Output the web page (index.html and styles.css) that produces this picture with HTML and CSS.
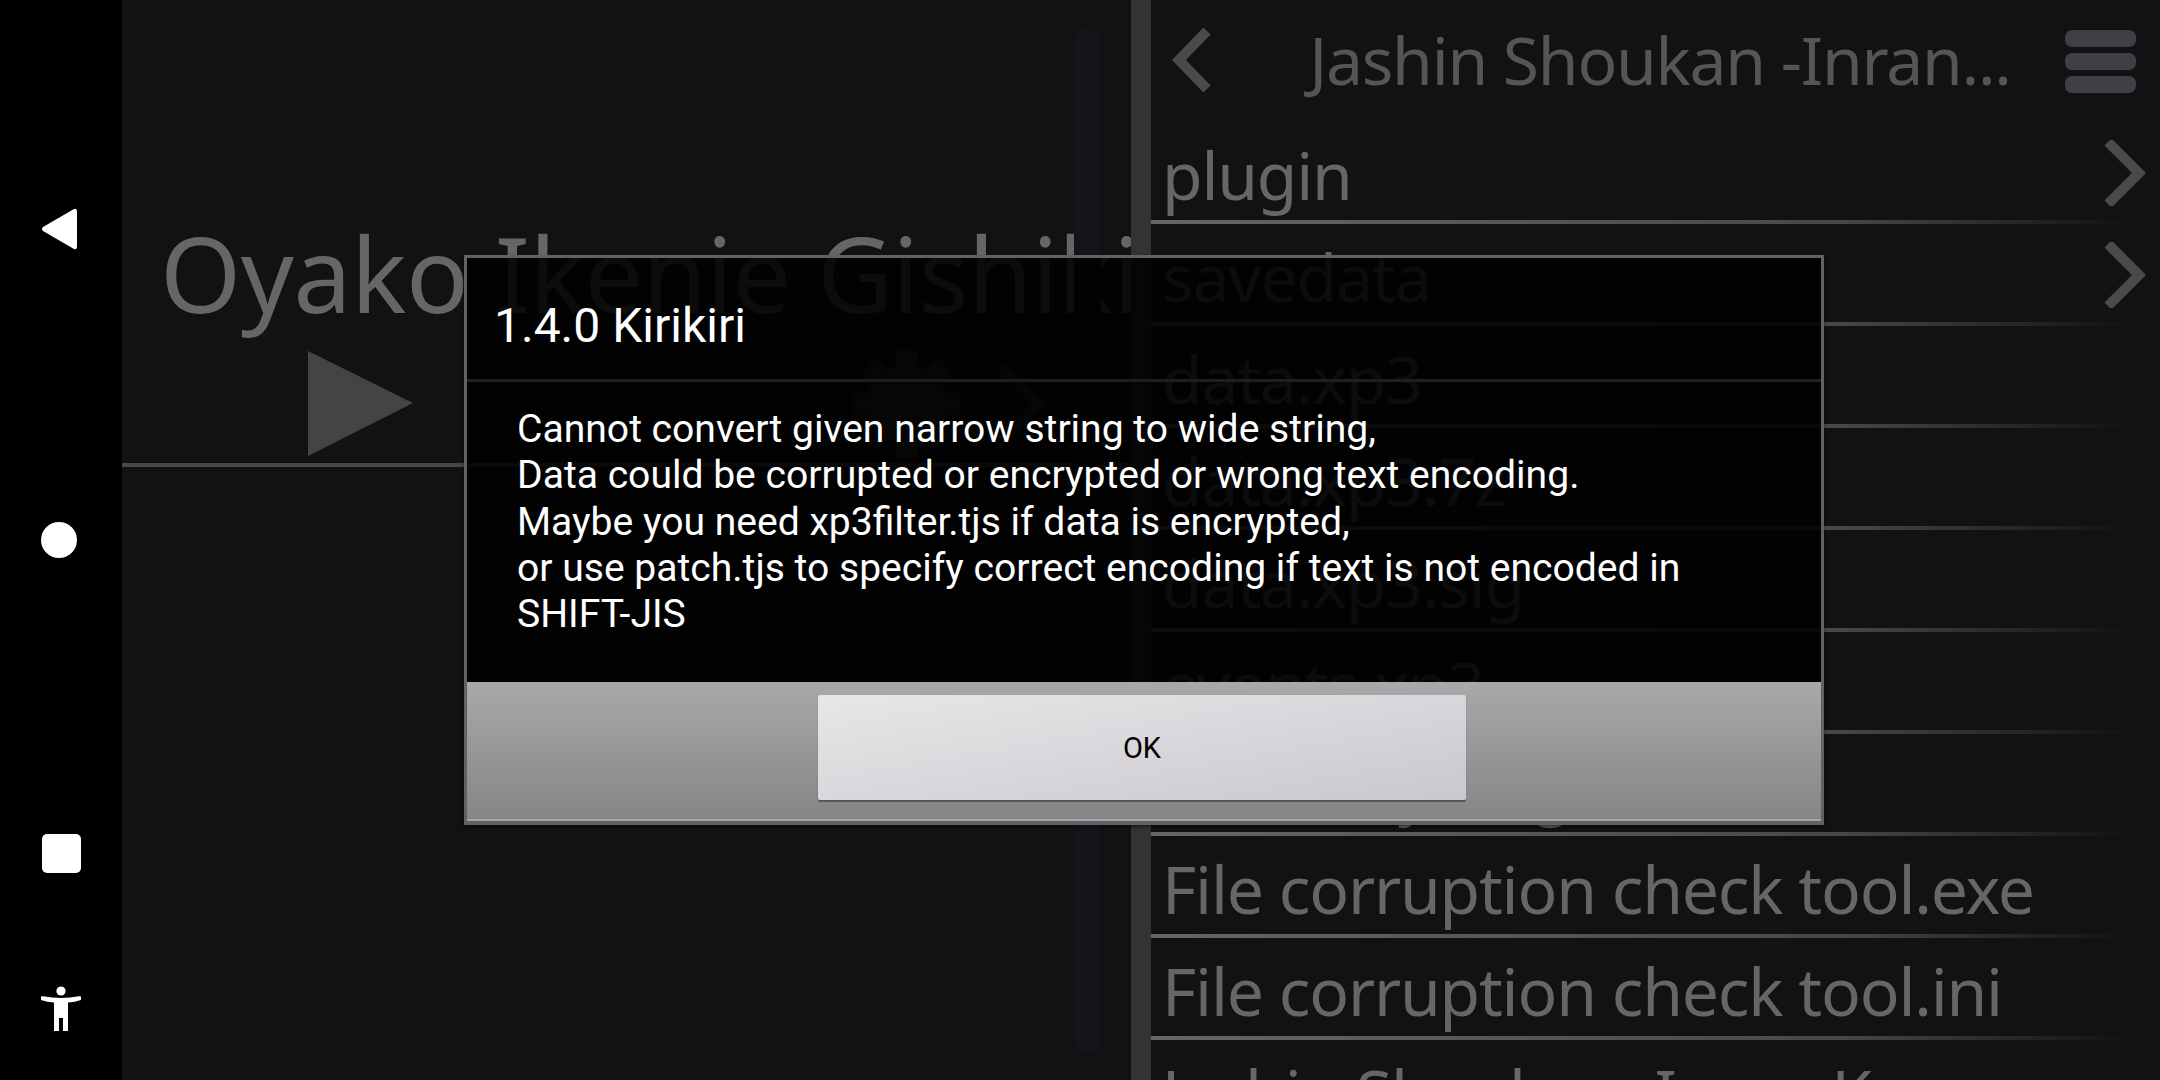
FILE: index.html
```html
<!DOCTYPE html>
<html lang="en">
<head>
  <meta charset="UTF-8" />
  <title>Kirikiri</title>
  <link rel="stylesheet" href="styles.css">
</head>
<body>

  <div class="screen">
    <!-- system nav bar -->
    <div class="navbar">
      <svg class="nav-back" width="36" height="42" viewBox="0 0 36 42"><path d="M33 1 Q36 0 36 4 V38 Q36 42 33 41 L2 23 Q0 21 2 19 Z" fill="#fff"/></svg>
      <div class="nav-home"></div>
      <div class="nav-recent"></div>
      <svg class="nav-access" width="40" height="46" viewBox="0 0 40 46"><circle cx="20" cy="5" r="4.6" fill="#fff"/><path d="M0 10.500 Q1 10 2 10.300 Q11 12 20 12 Q29 12 38 10.300 Q39 10 40 10.500 V14 Q34 16 27 16.500 V45 H22 V32 H18 V45 H13 V16.500 Q6 16 0 14 Z" fill="#fff"/></svg>
    </div>

    <!-- game list -->
    <div class="left-panel">
      <div class="game">
        <div class="game-title">Oyako Ikenie Gishiki</div>
        <div class="game-controls">
          <div class="play"></div>
          <svg class="gear" width="108" height="108" viewBox="0 0 108 108">
            <g fill="#333">
              <rect x="43" y="0" width="22" height="108" rx="3"/>
              <rect x="43" y="0" width="22" height="108" rx="3" transform="rotate(45 54 54)"/>
              <rect x="43" y="0" width="22" height="108" rx="3" transform="rotate(90 54 54)"/>
              <rect x="43" y="0" width="22" height="108" rx="3" transform="rotate(135 54 54)"/>
            </g>
            <circle cx="54" cy="54" r="30" fill="none" stroke="#333" stroke-width="20"/>
          </svg>
          <svg class="game-more" width="52" height="80" viewBox="0 0 52 80"><path d="M5 4 L44 40 L5 76" fill="none" stroke="#333" stroke-width="10"/></svg>
        </div>
      </div>
      <div class="scrollbar"></div>
    </div>

    <div class="divider"></div>

    <!-- file browser -->
    <div class="right-panel">
      <div class="header">
        <svg class="back" width="40" height="64" viewBox="0 0 40 64"><path d="M35 3 L7 32 L35 61" fill="none" stroke="#4a4a4d" stroke-width="10"/></svg>
        <div class="header-title">Jashin Shoukan -Inran...</div>
        <div class="menu-icon"><span></span><span></span><span></span></div>
      </div>
      <div class="row"><span>plugin</span><svg width="42" height="66" viewBox="0 0 42 66"><path d="M4 2 L35 33 L4 64" fill="none" stroke="#4a4a4d" stroke-width="10"/></svg></div>
      <div class="row"><span>savedata</span><svg width="42" height="66" viewBox="0 0 42 66"><path d="M4 2 L35 33 L4 64" fill="none" stroke="#4a4a4d" stroke-width="10"/></svg></div>
      <div class="row"><span>data.xp3</span></div>
      <div class="row"><span>data.xp3.7z</span></div>
      <div class="row"><span>data.xp3.sig</span></div>
      <div class="row"><span>events.xp3</span></div>
      <div class="row"><span>Kirikiri.sys.log</span></div>
      <div class="row"><span>File corruption check tool.exe</span></div>
      <div class="row"><span>File corruption check tool.ini</span></div>
      <div class="row"><span>Jashin Shoukan -Inran K...</span></div>
    </div>

    <!-- error dialog -->
    <div class="dialog">
      <div class="dialog-title">1.4.0 Kirikiri</div>
      <div class="dialog-body">
        Cannot convert given narrow string to wide string,<br>
        Data could be corrupted or encrypted or wrong text encoding.<br>
        Maybe you need xp3filter.tjs if data is encrypted,<br>
        or use patch.tjs to specify correct encoding if text is not encoded in<br>
        SHIFT-JIS
      </div>
      <div class="dialog-footer">
        <button class="ok-btn">OK</button>
      </div>
    </div>
  </div>

</body>
</html>
```

FILE: styles.css
```css
body {
  margin: 0;
  background: #121114;
  overflow: hidden;
  font-family: "Noto Sans", sans-serif;
}

.screen {
  position: relative;
  display: flex;
  width: 2160px;
  height: 1080px;
  overflow: hidden;
}

.navbar {
  position: relative;
  width: 122px;
  flex-shrink: 0;
  background: #000;
}

.nav-back,
.nav-home,
.nav-recent,
.nav-access {
  position: absolute;
}

.nav-back {
  left: 41px;
  top: 208px;
}

.nav-home {
  left: 41px;
  top: 522px;
  width: 36px;
  height: 36px;
  border-radius: 50%;
  background: #fff;
}

.nav-recent {
  left: 42px;
  top: 834px;
  width: 39px;
  height: 39px;
  border-radius: 5px;
  background: #fff;
}

.nav-access {
  left: 41px;
  top: 986px;
}

.left-panel {
  position: relative;
  width: 1009px;
  flex-shrink: 0;
  overflow: hidden;
}

.game {
  margin-top: 205px;
  height: 262px;
  box-sizing: border-box;
  border-bottom: 4px solid #48484a;
}

.game-title {
  padding-left: 38px;
  font-size: 104px;
  letter-spacing: -0.550px;
  line-height: 136px;
  color: #666;
  white-space: nowrap;
}

.game-controls {
  display: flex;
  align-items: center;
  height: 105px;
  margin-top: 10px;
  padding-left: 186px;
}

.play {
  width: 0;
  height: 0;
  border-left: 105px solid #444;
  border-top: 52px solid transparent;
  border-bottom: 53px solid transparent;
}

.gear {
  margin-left: 440px;
}

.game-more {
  margin-left: 35px;
}

.scrollbar {
  position: absolute;
  left: 952px;
  top: 29px;
  width: 27px;
  height: 1023px;
  border-radius: 13px;
  background: #14151b;
}

.divider {
  width: 20px;
  flex-shrink: 0;
  background: #333235;
}

.right-panel {
  flex: 1;
  min-width: 0;
}

.header {
  display: flex;
  align-items: center;
  height: 122px;
  box-sizing: border-box;
  padding: 0 24px 0 21px;
}

.back {
  margin-top: -2px;
  flex-shrink: 0;
}

.header-title {
  flex: 1;
  padding-left: 43px;
  text-align: center;
  font-size: 66px;
  letter-spacing: -1.250px;
  color: #555;
  white-space: nowrap;
  margin-top: -4px;
}

.menu-icon {
  display: flex;
  flex-direction: column;
  gap: 6px;
  width: 71px;
  flex-shrink: 0;
}

.menu-icon span {
  height: 17px;
  border-radius: 7px;
  background: #413f43;
}

.row {
  display: flex;
  align-items: center;
  justify-content: space-between;
  height: 102px;
  box-sizing: border-box;
  padding: 0 14px 4px 11px;
  position: relative;
  font-size: 66px;
  letter-spacing: -1.200px;
  line-height: 98px;
  color: #666;
  white-space: nowrap;
}

.row span {
  padding-top: 6px;
}

.row svg {
  margin-top: 4px;
}

.row::after {
  content: "";
  position: absolute;
  left: 0;
  right: 30px;
  bottom: 0;
  height: 4px;
  background: linear-gradient(to right, #666, #484849 70%, #121114);
}

.dialog {
  position: absolute;
  left: 464px;
  top: 255px;
  width: 1360px;
  height: 570px;
  box-sizing: border-box;
  display: flex;
  flex-direction: column;
  border: 3px solid #626264;
  border-bottom-width: 4px;
  background: rgba(0, 0, 0, 0.88);
  box-shadow: 0 2px 3px rgba(0, 0, 0, 0.5);
  font-family: Roboto, sans-serif;
  color: #fff;
}

.dialog-title {
  height: 124px;
  box-sizing: border-box;
  padding: 40px 0 0 27px;
  font-size: 48px;
  line-height: 56px;
  border-bottom: 3px solid #1f1e21;
}

.dialog-body {
  flex: 1;
  padding: 24px 50px 0 50px;
  font-size: 39.100px;
  line-height: 46.300px;
}

.dialog-footer {
  display: flex;
  justify-content: center;
  align-items: flex-start;
  height: 139px;
  box-sizing: border-box;
  padding: 13px 4px 0 0;
  background: linear-gradient(to bottom, #a9a8aa, #858487);
  box-shadow: inset 0 -2px 0 #a4a3a5;
}

.ok-btn {
  width: 648px;
  height: 105px;
  border: none;
  border-radius: 2px;
  background: linear-gradient(170deg, #e8e6e9, #cac8cc);
  box-shadow: 0 2px 1px #555;
  font-family: Roboto, sans-serif;
  font-size: 29px;
  color: #000;
}
```
